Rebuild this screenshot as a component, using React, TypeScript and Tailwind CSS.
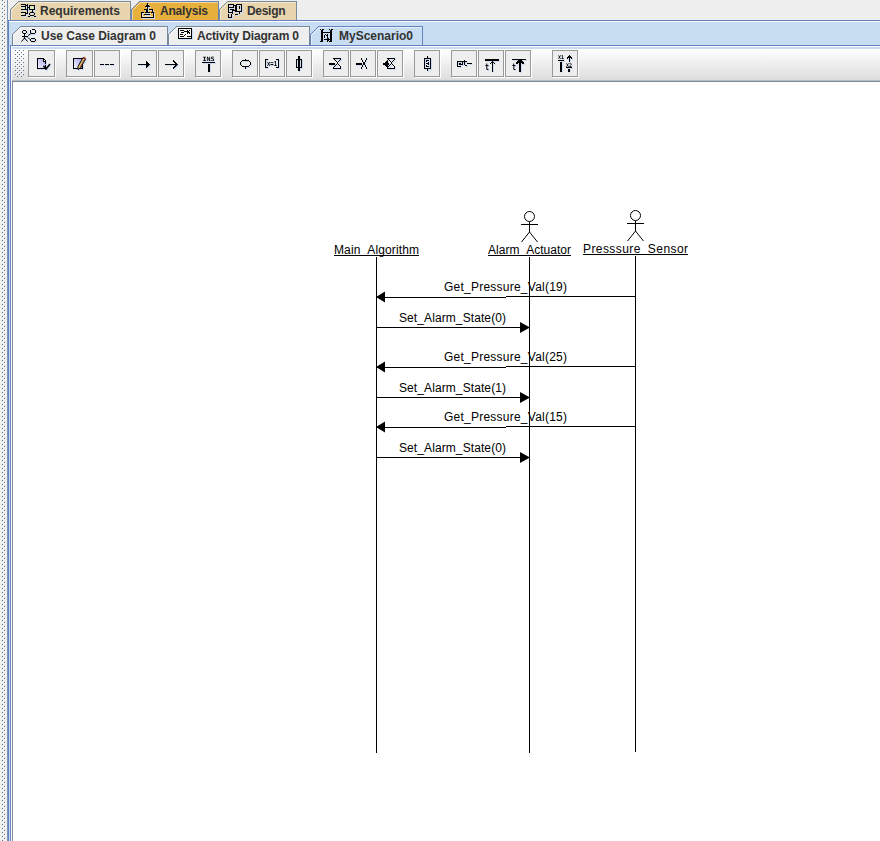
import React from "react";

type IconProps = { children: React.ReactNode; w?: number; h?: number };

function Icon({ children, w = 16, h = 17 }: IconProps) {
  return (
    <svg
      width={w}
      height={h}
      viewBox={`0 0 ${w} ${h}`}
      fill="none"
      stroke="#000"
      strokeWidth="1"
      shapeRendering="crispEdges"
      className="block shrink-0 overflow-visible drop-shadow-[1px_1px_0_#cbdcf8]"
    >
      {children}
    </svg>
  );
}

function Tiny({ x, y, size = 6, children, width, sans = false }: { x: number; y: number; size?: number; children: string; width: number; sans?: boolean }) {
  return (
    <text x={x} y={y} fontSize={size} textLength={width} lengthAdjust="spacingAndGlyphs" fill="#000" stroke="none" fontWeight="bold" fontFamily={sans ? "Liberation Sans, sans-serif" : "DejaVu Sans Mono, monospace"}>
      {children}
    </text>
  );
}

const RequirementsIcon = () => (
  <Icon>
    <path d="M1 2.500h4v2h-4M1 7.500h4v-3M1 10.500h4v3h-4" fill="#dce6b8" />
    <path d="M5 3.500h3M7.500 2v10M5 11.500h3M7 5.500h3M5 7.500h3" />
    <path d="M9.500 3.500h5v4h-5z" fill="#dce6b8" />
    <path d="M12.500 8v2M10 10.500h4M9.500 11v2M14.500 11v2M10 13.500h4M8 14.500h2M14 14.500h2" />
  </Icon>
);

const AnalysisIcon = () => (
  <Icon>
    <path d="M7.500 1v9M5 4.500h5M6 3.500h3M5 10.500h5M4 7.500h2v2M9 7.500h3v3M1 10.500h3M1.500 10v5M13.500 10v5M11 10.500h3M1 15.500h13M4 12.500h6" />
    <path d="M2 14.500h11" stroke="#f6e2aa" />
  </Icon>
);

const DesignIcon = () => (
  <Icon>
    <path d="M1.500 2.500h5v3h-5zM1.500 5v5M1 10.500h4M5.500 8v4M1.500 12v3M1 15.500h4M4.500 12v3M3 7.500h4" />
    <path d="M7 3.500h2M9.500 2.500h5v7h-5zM8.500 4v6M12.500 4v3M12.500 10v2M6 8.500h3M8 12.500h3" />
  </Icon>
);

const UseCaseIcon = () => (
  <Icon>
    <path d="M2 3.500h3M1.500 4v2M5.500 4v2M2 6.500h3M3.500 7v5M1 9.500h6" />
    <path d="M3.500 11l-3 3.500M3.500 11l3 3.500M7 8.500l3-2M7 10.500l2 2" shapeRendering="auto" />
    <path d="M11 2.500h3M9.500 3v3M14.500 3v3M10 6.500h4M10 11.500h4M9.500 12v2M14.500 12v2M10 14.500h4" />
  </Icon>
);

const ActivityIcon = () => (
  <Icon>
    <path d="M1.500 1.500h13v10h-13z" fill="#f7f7f7" />
    <path d="M3 3.500h4M4 5.500h3M3 9.500h4M7 4.500h3M3 7.500h3M10 9.500h4" />
    <path d="M10 3l3 4M13 3l-3 4M7 9l2-2" />
  </Icon>
);

const ScenarioIcon = () => (
  <Icon>
    <path d="M1 2.500h1M3 2.500h2M10 2.500h1M12 2.500h2M1 14.500h1M10 14.500h1" />
    <path d="M3 3v12M12 3v12" strokeWidth="2" />
    <path d="M4 5.500h7M5 12.500h5M8 10.500l2 2-2 2M5.500 8v3M6 7.500h1M7 8.500h1M8.500 7v4" />
  </Icon>
);

const NoteIcon = ({ pencil = false }: { pencil?: boolean }) => (
  <Icon w={17}>
    <defs>
      <linearGradient id="paper" x1="1" y1="0" x2="0" y2="1">
        <stop offset="0" stopColor="#a4a4ee" />
        <stop offset="1" stopColor="#f6f6ff" />
      </linearGradient>
    </defs>
    {pencil ? (
      <g>
        <path d="M2.500 3.500h9v10h-9z" fill="url(#paper)" />
        <g shapeRendering="auto">
          <path d="M12 2.500l2.500 1.500-5 9-2.500 1.500v-3z" fill="#dfc96c" />
          <path d="M12.500 2.500l2 1.500" stroke="#a32c32" strokeWidth="2" />
          <path d="M13 5l-4 7.500" stroke="#9c4a43" />
        </g>
      </g>
    ) : (
      <g>
        <path d="M12.500 10v3.500h-8v-10h6l2 2v3" fill="url(#paper)" />
        <path d="M10.500 3v3h2" fill="#fff" />
        <path d="M10.500 11l2.500 3 4-5" strokeWidth="1.500" shapeRendering="auto" />
      </g>
    )}
  </Icon>
);

const DashedIcon = () => (
  <Icon><path d="M1 9.500h4M6 9.500h4M11 9.500h4" /></Icon>
);

const ArrowIcon = ({ solid = false }: { solid?: boolean }) => (
  <Icon>
    <path d="M2 9.500h12" />
    {solid ? <path d="M10 6l4.500 3.500-4.500 3.500z" fill="#000" stroke="none" /> : <path d="M10 5.500l4 4-4 4" />}
  </Icon>
);

const InstanceIcon = () => (
  <Icon>
    <Tiny x={2.5} y={6} width={12}>INS</Tiny>
    <path d="M2 7.500h13" />
    <path d="M9 9v8" strokeWidth="2" />
  </Icon>
);

const StateIcon = () => (
  <Icon><path d="M5 5.500h7M5 11.500h7M3.500 7v3M13.500 7v3M4 6.500h1M12 6.500h1M4 10.500h1M12 10.500h1M8.500 4v1M8.500 12v2" /></Icon>
);

const ConditionIcon = () => (
  <Icon>
    <path d="M4 4.500h-2.500v8h2.500M12 4.500h2.500v8h-2.500" />
    <Tiny x={3} y={11} width={10} size={8} sans>x=1</Tiny>
  </Icon>
);

const ExecutionIcon = () => (
  <Icon><path d="M8 1v15" strokeWidth="2" /><path d="M5.500 4.500h5v8h-5z" /></Icon>
);

const TimerIcon = ({ kind }: { kind: "set" | "stop" | "timeout" }) => (
  <Icon>
    <path d="M1 9h6" strokeWidth="2" />
    {kind === "stop" ? (
      <path d="M6.500 3v2M7.500 5v2M8.500 7v3M7.500 10v2M6.500 12v2M11.500 3v2M10.500 5v2M9.500 7v3M10.500 10v2M11.500 12v2" />
    ) : (
      <path d="M5 3.500h8M6.500 4v1M7.500 5v1M8.500 6v1M9.500 7v2M10.500 6v1M11.500 5v1M12.500 4v1M8.500 9v1M7.500 10v1M6.500 11v1M5.500 12v1M10.500 9v1M11.500 10v1M12.500 11v2M5 13.500h8" />
    )}
    {kind === "timeout" && <path d="M5.500 5L1 9l4.500 4z" fill="#000" stroke="none" />}
  </Icon>
);

const BoxedIcon = () => (
  <Icon><path d="M8.500 1v2M8.500 14v2M5.500 3.500h6v10h-6zM7 5.500h3M7 8.500h3M7 11.500h3M7.500 6v1M9.500 7v1M9.500 9v1M7.500 10v1" /></Icon>
);

const EventTimeIcon = () => (
  <Icon>
    <path d="M1.500 6v5M2 6.500h5M6.500 7v3M3.500 8v2M4 8.500h1M4 9.500h3M1 11.500h4M8.500 5v5M7 6.500h4M9 10.500h2M11 8.500h5" />
  </Icon>
);

const DelayIcon = ({ bold = false }: { bold?: boolean }) => (
  <Icon>
    <path d={bold ? "M2 4.500h14" : "M2 5h14"} strokeWidth={bold ? 1 : 2} />
    <path d={bold ? "M10 5v12" : "M9.500 5v12"} strokeWidth={bold ? 2 : 1} />
    <path d={bold ? "M6 9l4-4 4 4" : "M7 9l2.500-2.500 2.500 2.500"} strokeWidth={bold ? 2 : 1} />
    <Tiny x={2} y={15} width={4} size={8}>t</Tiny>
  </Icon>
);

const TransferIcon = () => (
  <Icon>
    <Tiny x={1} y={4} width={6} size={5}>X1</Tiny>
    <path d="M1 5.500h6M9 12.500h6M12.500 1v6M10 3.500l2.500-2.500 2.500 2.500" />
    <path d="M4 7v10M12 14v3" strokeWidth="2" />
    <Tiny x={9} y={11.5} width={6} size={5}>X2</Tiny>
  </Icon>
);

type TabProps = { label: string; icon: React.ReactNode; size: string; fill: string; edge: string; width: number; pad: string; textWidth: number; baseline?: number };

function Tab({ label, icon, size, fill, edge, width, pad, textWidth, baseline = 12 }: TabProps) {
  return (
    <div className={`relative flex h-[19px] items-center ${size} ${pad}`}>
      <svg width={width} height="19" className="absolute inset-0" shapeRendering="crispEdges">
        <path d={`M.500 19V8.500L8.500 .500H${width - 0.5}V19`} fill={fill} stroke={edge} />
        <path d={`M1.500 19V9.500L9.500 1.500H${width - 1}`} fill="none" stroke="#fff" strokeOpacity=".5" />
      </svg>
      <span className="relative">{icon}</span>
      <svg height="16" className="relative ml-1 grow overflow-visible">
        <text x="0" y={baseline} fontSize="12" fontWeight="bold" fill="#333" textLength={textWidth} lengthAdjust="spacing">{label}</text>
      </svg>
    </div>
  );
}

function Tool({ children, wide = false }: { children: React.ReactNode; wide?: boolean }) {
  return (
    <button className={`flex h-[27px] shrink-0 items-center justify-center border border-[#999] bg-[#eee] shadow-[1px_1px_0_#fff] ${wide ? "w-[27px]" : "w-[26px]"}`}>
      {children}
    </button>
  );
}

function Group({ children, className = "" }: { children: React.ReactNode; className?: string }) {
  return <div className={`flex gap-px ${className}`}>{children}</div>;
}

// Staggered one-pixel bumps of a drag handle.
function Bumps({ id, width, height }: { id: string; width: number; height: number }) {
  return (
    <svg width={width} height={height} className="block" shapeRendering="crispEdges">
      <pattern id={id} width="4" height="4" patternUnits="userSpaceOnUse">
        <path d="M0 0h1v1h-1zM2 2h1v1h-1z" fill="#607489" />
        <path d="M1 1h1v1h-1zM3 3h1v1h-1z" fill="#fff" />
      </pattern>
      <rect width={width} height={height} fill={`url(#${id})`} />
    </svg>
  );
}

function Actor({ x, y }: { x: number; y: number }) {
  return (
    <g fill="none" stroke="#000">
      <circle cx={x} cy={y + 5.5} r="5" />
      <path d={`M${x} ${y + 11}v10M${x - 8.5} ${y + 13.5}h17`} shapeRendering="crispEdges" />
      <path d={`M${x - 8} ${y + 31}l8-10l8 10`} />
    </g>
  );
}

function Lifeline({ x, y, label, left, width }: { x: number; y: number; label: [string, string]; left: number; width: number }) {
  return (
    <g>
      <text x={left} y={y} textLength={width}>
        {label[0]}<tspan dy="-1">_</tspan><tspan dy="1">{label[1]}</tspan>
      </text>
      <path d={`M${left} ${y + 1.5}h${width}M${x} ${y + 3}V${y + 499}`} stroke="#000" shapeRendering="crispEdges" />
    </g>
  );
}

function PressureMessage({ y, value }: { y: number; value: number }) {
  return (
    <g>
      <text x="432" y={y - 6} textLength="123">{`Get_Pressure_Val(${value})`}</text>
      <path d={`M364 ${y + 0.5}h130M494 ${y - 0.5}h130`} stroke="#000" shapeRendering="crispEdges" />
      <path d={`M364 ${y}l9-5.500v11z`} />
    </g>
  );
}

function AlarmMessage({ y, value }: { y: number; value: number }) {
  return (
    <g>
      <text x="387" y={y - 5} textLength="107">{`Set_Alarm_State(${value})`}</text>
      <path d={`M364 ${y + 0.5}h153`} stroke="#000" shapeRendering="crispEdges" />
      <path d={`M518 ${y + 0.5}l-10-5.500v11z`} />
    </g>
  );
}

function Diagram() {
  return (
    <svg width="868" height="759" className="-ml-px block text-[12px]" fill="#000">
      <Lifeline x={364.5} y={172} label={["Main", "Algorithm"]} left={322} width={85} />
      <Lifeline x={517.5} y={172} label={["Alarm", "Actuator"]} left={476} width={83} />
      <Lifeline x={623.5} y={171} label={["Presssure", "Sensor"]} left={571} width={105} />
      <Actor x={517.5} y={129} />
      <Actor x={623.5} y={128} />
      <PressureMessage y={215} value={19} />
      <AlarmMessage y={245} value={0} />
      <PressureMessage y={285} value={25} />
      <AlarmMessage y={315} value={1} />
      <PressureMessage y={345} value={15} />
      <AlarmMessage y={375} value={0} />
    </svg>
  );
}

export default function App() {
  return (
    <div className="flex h-[841px] w-[880px] overflow-hidden bg-[#eee] font-['Liberation_Sans',sans-serif]">
      <div className="w-2 shrink-0 border-r border-[#7d93b8] pl-0.5"><Bumps id="divider" width={4} height={841} /></div>
      <div className="flex min-w-0 grow flex-col">
        <div className="flex h-5 items-end pl-0.5">
          <Tab label="Requirements" icon={<RequirementsIcon />} size="w-[121px]" width={121} textWidth={80} baseline={13} pad="pl-[10px]" fill="#e8d5ae" edge="#77899b" />
          <Tab label="Analysis" icon={<AnalysisIcon />} size="w-[88px]" width={88} textWidth={48} baseline={13} pad="pl-[9px]" fill="#e7b03d" edge="#6382bf" />
          <Tab label="Design" icon={<DesignIcon />} size="w-[78px]" width={78} textWidth={38.5} baseline={13} pad="pl-[8px]" fill="#e8d5ae" edge="#77899b" />
        </div>
        <div className="flex min-h-0 grow flex-col border-t border-l border-[#6382bf] bg-[#c8ddf2]">
          <div className="flex h-[25px] items-end border-t border-white pl-[3px]">
            <Tab label="Use Case Diagram 0" icon={<UseCaseIcon />} size="w-[156px]" width={156} textWidth={115} pad="pl-[9px]" fill="#eee" edge="#77899b" />
            <Tab label="Activity Diagram 0" icon={<ActivityIcon />} size="w-[142px]" width={142} textWidth={102} pad="pl-[8.5px]" fill="#eee" edge="#77899b" />
            <Tab label="MyScenario0" icon={<ScenarioIcon />} size="w-[113px]" width={113} textWidth={74} pad="pl-[9px]" fill="#c8ddf2" edge="#6382bf" />
          </div>
          <div className="ml-px flex grow flex-col border-t border-l border-[#6382bf]">
            <div className="flex grow flex-col border-t border-l border-white">
              <div className="mt-0.5 flex h-8 items-start border-b border-[#b6bec3] bg-linear-to-b from-white to-[#ddd] pt-px">
                <div className="ml-[3px] mr-[4px]"><Bumps id="grip" width={9} height={27} /></div>
                <Tool wide><NoteIcon /></Tool>
                <Group className="ml-[11px]"><Tool wide><NoteIcon pencil /></Tool><Tool><DashedIcon /></Tool></Group>
                <Group className="ml-[11px]"><Tool><ArrowIcon solid /></Tool><Tool><ArrowIcon /></Tool></Group>
                <Group className="ml-[11px]"><Tool><InstanceIcon /></Tool></Group>
                <Group className="ml-[11px]"><Tool><StateIcon /></Tool><Tool><ConditionIcon /></Tool><Tool><ExecutionIcon /></Tool></Group>
                <Group className="ml-[11px]"><Tool><TimerIcon kind="set" /></Tool><Tool><TimerIcon kind="stop" /></Tool><Tool><TimerIcon kind="timeout" /></Tool></Group>
                <Group className="ml-[11px]"><Tool><BoxedIcon /></Tool></Group>
                <Group className="ml-[11px]"><Tool><EventTimeIcon /></Tool><Tool><DelayIcon /></Tool><Tool><DelayIcon bold /></Tool></Group>
                <Group className="ml-[21px]"><Tool><TransferIcon /></Tool></Group>
              </div>
              <div className="border-t border-l border-[#7f8c96] bg-white"><Diagram /></div>
            </div>
          </div>
        </div>
      </div>
    </div>
  );
}
